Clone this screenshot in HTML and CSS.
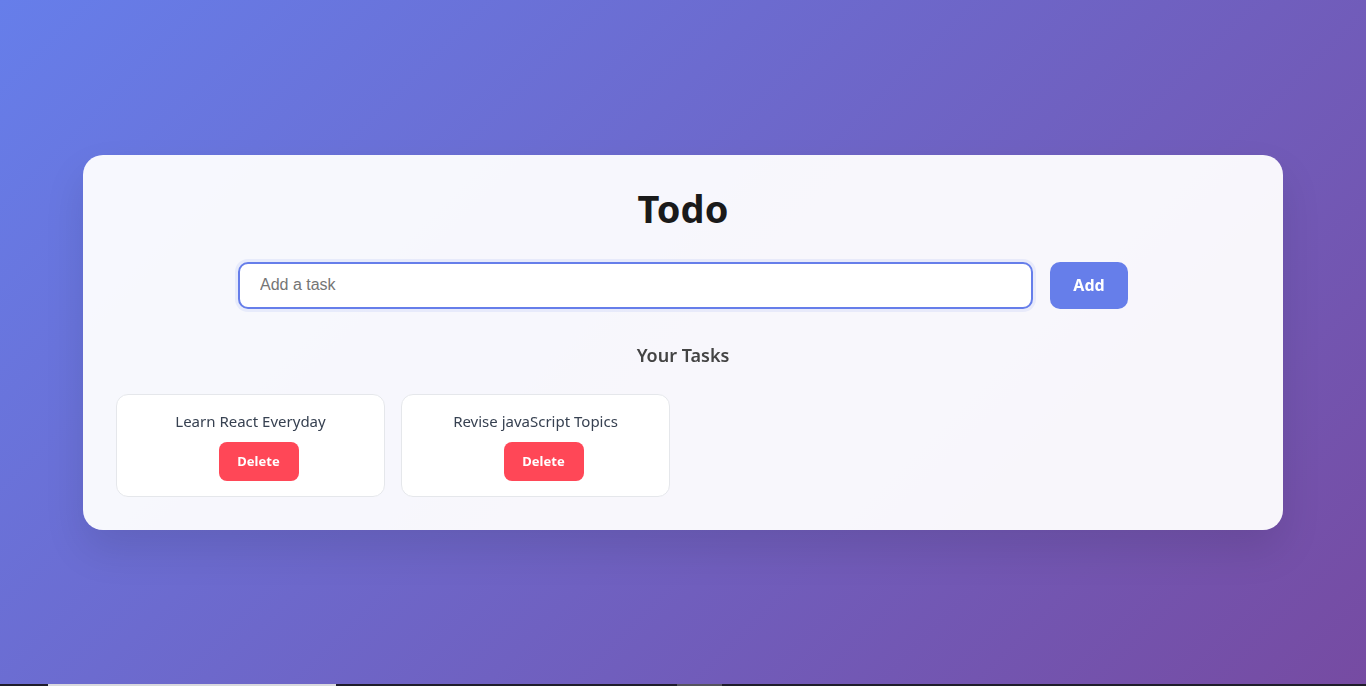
FILE: index.html
```html
<!DOCTYPE html>
<html lang="en">
<head>
<meta charset="utf-8">
<title>Todo</title>
<link rel="stylesheet" href="styles.css">
</head>
<body>
<main class="app">
  <h1 class="title">Todo</h1>
  <form class="add-form">
    <input class="task-input" type="text" placeholder="Add a task" autofocus>
    <button class="add-btn" type="button">Add</button>
  </form>
  <h2 class="subtitle">Your Tasks</h2>
  <ul class="task-list">
    <li class="task-card">
      <p class="task-text">Learn React Everyday</p>
      <button class="delete-btn" type="button">Delete</button>
    </li>
    <li class="task-card">
      <p class="task-text">Revise javaScript Topics</p>
      <button class="delete-btn" type="button">Delete</button>
    </li>
  </ul>
</main>
<div class="taskbar"><span class="tb-a"></span><span class="tb-b"></span></div>
</body>
</html>
```

FILE: styles.css
```css
* { box-sizing: border-box; }
html, body { margin: 0; padding: 0; }
body {
  min-height: 100vh;
  padding-bottom: 2px;
  background: linear-gradient(135deg, #667eea 0%, #764ba2 100%);
  font-family: "Noto Sans", "Open Sans", sans-serif;
  display: flex;
  align-items: center;
  justify-content: center;
}
.app {
  width: 1200px;
  background: rgba(255, 255, 255, 0.95);
  border-radius: 20px;
  padding: 28px 33px 33px;
  box-shadow: 0 20px 40px rgba(0, 0, 0, 0.1);
  display: flex;
  flex-direction: column;
  align-items: center;
}
.title {
  margin: 0;
  font-size: 38px;
  line-height: 50px;
  font-weight: 700;
  color: #1a1a1a;
}
.add-form {
  margin-top: 29px;
  display: flex;
  gap: 17px;
  width: 890px;
}
.task-input {
  flex: 1;
  height: 47px;
  padding: 0 20px;
  border: 2px solid #667eea;
  border-radius: 10px;
  font-family: "Liberation Sans", Arial, sans-serif;
  font-size: 16px;
  color: #333;
  background: #fff;
  outline: none;
  box-shadow: 0 0 0 3px rgba(102, 126, 234, 0.1);
}
.task-input::placeholder { color: #757575; }
.add-btn {
  width: 78px;
  height: 47px;
  border: none;
  border-radius: 10px;
  background: #667eea;
  color: #fff;
  font-family: "Noto Sans", sans-serif;
  font-weight: 700;
  font-size: 16px;
}
.subtitle {
  margin: 34px 0 0;
  font-size: 18px;
  line-height: 24px;
  font-weight: 600;
  color: #444;
}
.task-list {
  list-style: none;
  margin: 27px 0 0;
  padding: 0;
  align-self: stretch;
  display: grid;
  grid-template-columns: repeat(4, 269px);
  gap: 16px;
}
.task-card {
  background: #fff;
  border: 1px solid #e5e7eb;
  border-radius: 12px;
  padding: 15px 16px 15px;
  display: flex;
  flex-direction: column;
  align-items: center;
}
.task-text {
  margin: 0 0 10px;
  font-size: 15px;
  line-height: 22px;
  color: #374151;
}
.delete-btn {
  width: 80px;
  height: 39px;
  margin-left: 16px;
  border: none;
  border-radius: 8px;
  background: #ff4757;
  color: #fff;
  font-family: "Noto Sans", sans-serif;
  font-weight: 700;
  font-size: 13px;
}
.taskbar {
  position: fixed;
  left: 0;
  right: 0;
  bottom: 0;
  height: 2px;
  background: #1f1d2b;
}
.tb-a {
  position: absolute;
  left: 48px;
  width: 288px;
  top: 0;
  bottom: 0;
  background: #d9d9de;
}
.tb-b {
  position: absolute;
  left: 677px;
  width: 45px;
  top: 0;
  bottom: 0;
  background: #55535e;
}
```
